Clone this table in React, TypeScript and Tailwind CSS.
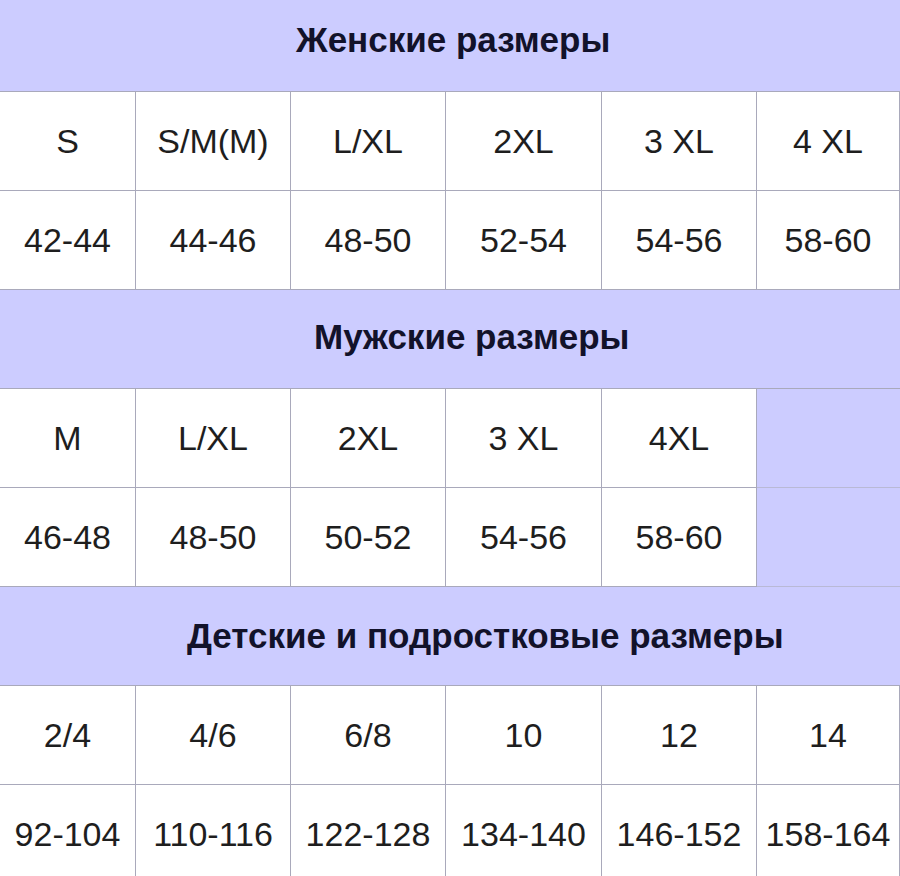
import React from "react";

const cols = "grid grid-cols-[136px_155px_155px_156px_155px_1fr]";

function Header({ text, cls }: { text: string; cls: string }) {
  return (
    <div
      className={
        "flex items-center justify-start bg-[#ccccff] border-b border-[#a9a9bb] font-bold text-[35px] text-[#12122a] " +
        cls
      }
    >
      {text}
    </div>
  );
}

function Row({ cells }: { cells: (string | null)[] }) {
  return (
    <div className={cols + " h-[99px]"}>
      {cells.map((c, i) =>
        c === null ? (
          <div key={i} className="bg-[#ccccff] border-b border-[#b9b9d6]" />
        ) : (
          <div
            key={i}
            className="flex items-center justify-center bg-white border-b border-r border-[#a9a9bb] text-[34px] text-[#1e1e1e]"
          >
            {c}
          </div>
        )
      )}
    </div>
  );
}

export default function App() {
  return (
    <div
      className="w-[900px] h-[876px] overflow-hidden bg-white"
      style={{ fontFamily: '"Liberation Sans", Arial, sans-serif' }}
    >
      <Header text="Женские размеры" cls="h-[92px] pb-[10px] pl-[296px]" />
      <Row cells={["S", "S/M(M)", "L/XL", "2XL", "3 XL", "4 XL"]} />
      <Row cells={["42-44", "44-46", "48-50", "52-54", "54-56", "58-60"]} />
      <Header text="Мужские размеры" cls="h-[99px] pb-[3px] pl-[314px]" />
      <Row cells={["M", "L/XL", "2XL", "3 XL", "4XL", null]} />
      <Row cells={["46-48", "48-50", "50-52", "54-56", "58-60", null]} />
      <Header text="Детские и подростковые размеры" cls="h-[99px] pl-[187px]" />
      <Row cells={["2/4", "4/6", "6/8", "10", "12", "14"]} />
      <Row cells={["92-104", "110-116", "122-128", "134-140", "146-152", "158-164"]} />
    </div>
  );
}
